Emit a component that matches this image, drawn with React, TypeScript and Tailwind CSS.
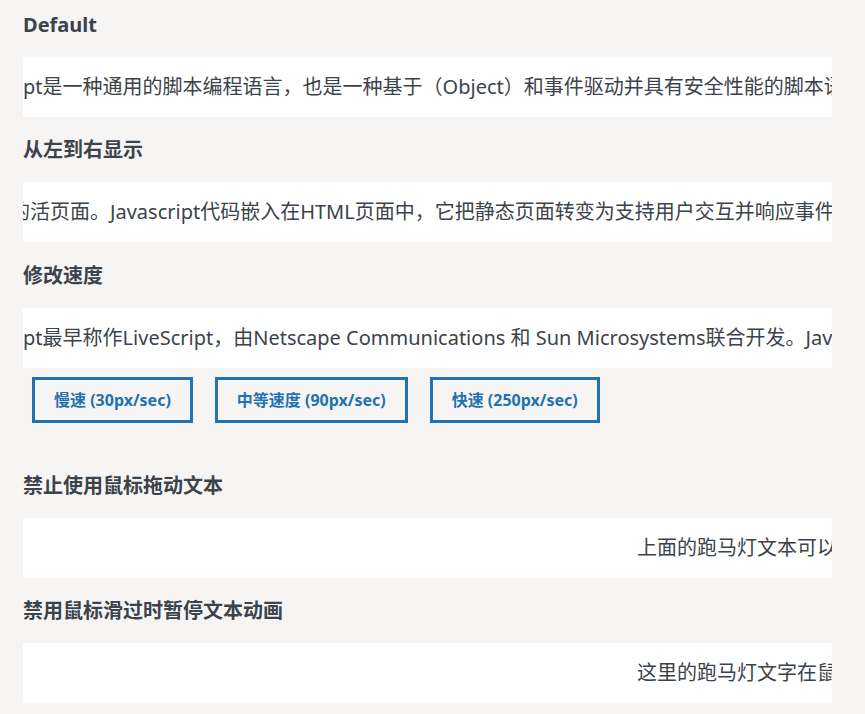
const sections = [
  {
    title: 'Default',
    text: 'JavaScript是一种通用的脚本编程语言，也是一种基于（Object）和事件驱动并具有安全性能的脚本语言。',
    offset: 'ml-[-72px]',
    gap: '',
  },
  {
    title: '从左到右显示',
    text: '使用它可以为网页增加动态效果，制作出生动的活页面。Javascript代码嵌入在HTML页面中，它把静态页面转变为支持用户交互并响应事件的动态页面。',
    offset: 'ml-[-413px]',
    gap: 'mt-[18px]',
  },
  {
    title: '修改速度',
    text: 'JavaScript最早称作LiveScript，由Netscape Communications 和 Sun Microsystems联合开发。JavaScript是一种脚本语言。',
    offset: 'ml-[-72px]',
    gap: 'mt-[19px]',
    speeds: ['慢速 (30px/sec)', '中等速度 (90px/sec)', '快速 (250px/sec)'],
  },
];

const staticRows = [
  {
    title: '禁止使用鼠标拖动文本',
    text: '上面的跑马灯文本可以使用鼠标拖动，而这里的文本则不可以。',
    gap: 'mt-[48px]',
  },
  {
    title: '禁用鼠标滑过时暂停文本动画',
    text: '这里的跑马灯文字在鼠标滑过时不会暂停。',
    gap: 'mt-[18px]',
  },
];

function Heading({ children }: { children: React.ReactNode }) {
  return <h3 className="text-[20px] font-bold leading-[30px] mb-[17px]">{children}</h3>;
}

function Marquee({ text, className }: { text: string; className: string }) {
  return (
    <div className="h-[60px] bg-white overflow-hidden flex items-center whitespace-nowrap text-[20px]">
      <span className={className}>{text}</span>
    </div>
  );
}

export default function App() {
  return (
    <div
      className="min-h-screen bg-[#f6f5f4] text-[#3c434a]"
      style={{ fontFamily: '"Noto Sans", "Noto Sans CJK SC", sans-serif' }}
    >
      <div className="w-[809px] ml-[23px] pt-[10px] pb-[11px]">
        {sections.map((s) => (
          <section key={s.title} className={s.gap}>
            <Heading>{s.title}</Heading>
            <Marquee text={s.text} className={s.offset} />
            {s.speeds && (
              <div className="mt-[9px] flex gap-[22px] pl-[9px]">
                {s.speeds.map((label) => (
                  <button
                    key={label}
                    className="h-[46px] px-[19px] border-[3px] border-[#2271b1] text-[#2271b1] text-[16px] font-bold"
                  >
                    {label}
                  </button>
                ))}
              </div>
            )}
          </section>
        ))}
        {staticRows.map((r) => (
          <section key={r.title} className={r.gap}>
            <Heading>{r.title}</Heading>
            <Marquee text={r.text} className="pl-[614px]" />
          </section>
        ))}
      </div>
    </div>
  );
}
